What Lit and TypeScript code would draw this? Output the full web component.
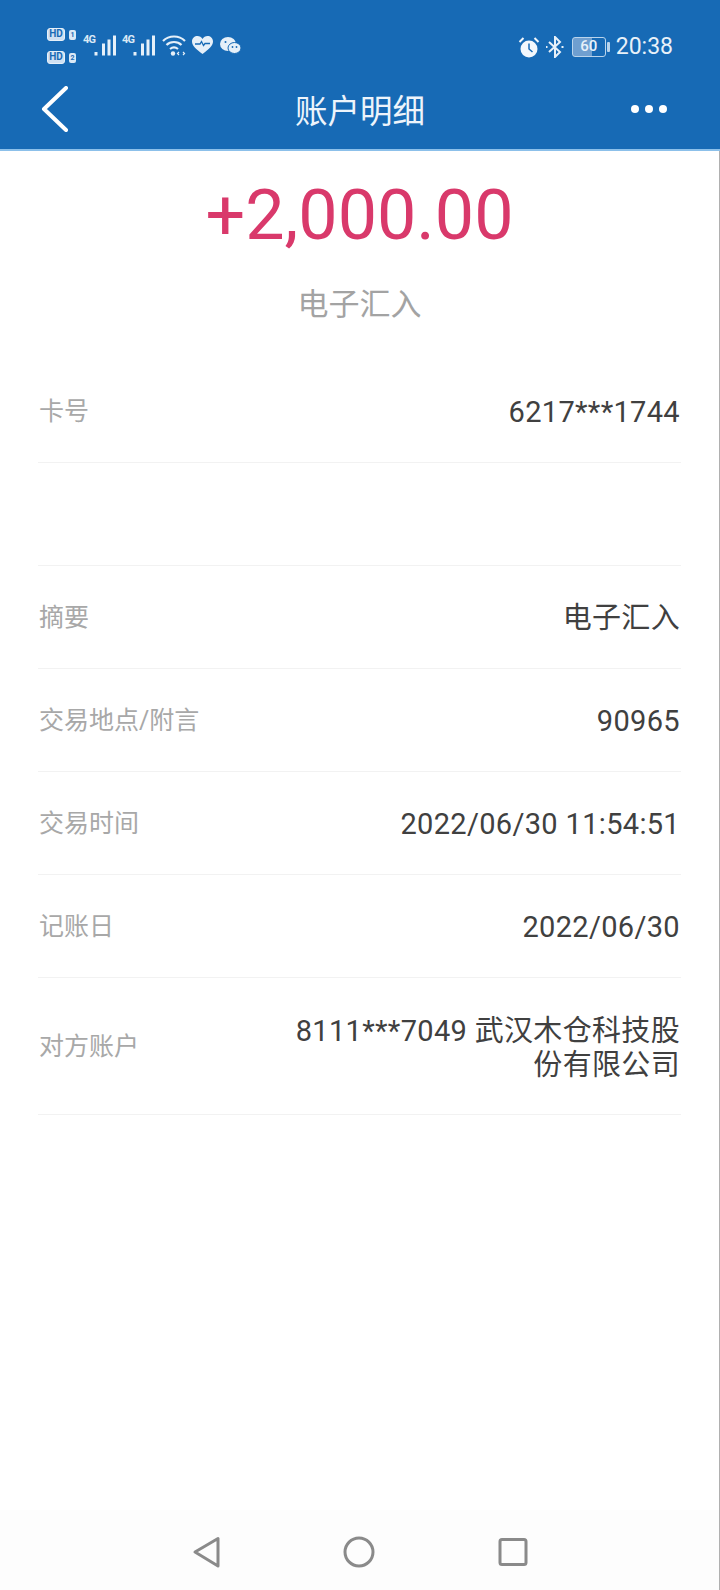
import { LitElement, html, css, svg } from "lit";
import { customElement } from "lit/decorators.js";

const rows: [string, string][] = [
  ["卡号", "6217***1744"],
  ["", ""],
  ["摘要", "电子汇入"],
  ["交易地点/附言", "90965"],
  ["交易时间", "2022/06/30 11:54:51"],
  ["记账日", "2022/06/30"],
];

const bars = svg`<rect x="11.500" y="17" width="3" height="3.500" /><rect x="19" y="8.500" width="3" height="12" /><rect x="24.500" y="4.500" width="3" height="16" /><rect x="30" y=".5" width="3" height="20" />`;

@customElement("app-root")
export class AppRoot extends LitElement {
  static styles = css`
    :host {
      display: block;
      width: 720px;
      height: 1590px;
      background: #fff;
      font-family: Roboto, "Noto Sans CJK SC", sans-serif;
      overflow: hidden;
    }
    .page { display: flex; flex-direction: column; height: 1590px; }
    header {
      height: 151px;
      flex: none;
      background: #176ab5;
      border-bottom: 2px solid #8cc0ea;
      box-sizing: border-box;
      color: #fff;
      display: flex;
      flex-direction: column;
    }
    .status {
      height: 81px;
      padding: 28px 47px 0 47px;
      box-sizing: border-box;
      display: flex;
      justify-content: space-between;
      align-items: flex-start;
    }
    .left, .right { display: flex; }
    .left { gap: 6px; align-items: flex-start; }
    .right { margin-top: 7px; gap: 6px; align-items: center; }
    .hd { display: flex; flex-direction: column; gap: 10px; width: 30px; }
    .hdrow { display: flex; align-items: center; gap: 4px; }
    .hdbox {
      box-sizing: border-box;
      border: 1.5px solid #e6f0f9;
      background: #cfe0f2;
      color: #176ab5;
      font: 700 10px/10px Roboto, sans-serif;
      width: 18px;
      height: 13px;
      border-radius: 3px;
      text-align: center;
    }
    .sim {
      background: #dbe9f6;
      color: #176ab5;
      font: 700 7px/10px Roboto, sans-serif;
      width: 7px;
      height: 10px;
      border-radius: 2px;
      text-align: center;
    }
    .net { position: relative; width: 33px; height: 21px; margin-top: 7px; }
    .net span {
      position: absolute;
      left: 0;
      top: 0;
      font: 700 11px/10px Roboto, sans-serif;
      letter-spacing: -0.8px;
      color: #dbe9f6;
    }
    .net svg { position: absolute; left: 0; top: 0; fill: #e6f0f9; }
    .wifi { margin: 7px 0 0 1px; }
    .heart { margin-top: 8px; }
    .chat { margin: 9px 0 0 1px; }
    .clock {
      font: 400 23px/24px Roboto, sans-serif;
      color: #e8f1f9;
    }
    .battery {
      width: 34px;
      height: 20px;
      border: 1.5px solid #b9d4ec;
      border-radius: 3px;
      box-sizing: border-box;
      font: 500 15px/17px Roboto, sans-serif;
      text-align: center;
      color: #e8f1f9;
      background: linear-gradient(90deg, #6f9fd0 60%, transparent 60%);
    }
    .batwrap { display: flex; align-items: center; gap: 1px; margin: 0 0 0 2px; }
    .cap { width: 3px; height: 10px; background: #b9d4ec; border-radius: 1px; }
    .nav {
      flex: 1;
      display: flex;
      align-items: center;
      justify-content: space-between;
      padding: 0 53px 0 41px;
      position: relative;
      margin-top: -13px;
    }
    .title {
      position: absolute;
      left: 0;
      right: 0;
      padding-top: 6px;
      text-align: center;
      font-size: 32.500px;
      line-height: 40px;
      color: #edf4fb;
    }
    .dots { display: flex; gap: 6px; }
    .dots i { width: 8px; height: 8px; border-radius: 50%; background: #fff; }
    .body {
      flex: 1;
      display: flex;
      flex-direction: column;
      border-right: 1px solid #b0b0b0;
    }
    .amount {
      margin-top: 29px;
      text-align: center;
      font-size: 70px;
      line-height: 70px;
      color: #d9396b;
    }
    .sub {
      margin-top: 35px;
      text-align: center;
      font-size: 31px;
      line-height: 40px;
      color: #a3a3a3;
    }
    .list { margin: 35px 38px 0 38px; }
    .row {
      height: 103px;
      box-sizing: border-box;
      border-bottom: 1px solid #f2f2f2;
      padding: 2px 1px 0;
      display: flex;
      align-items: center;
      justify-content: space-between;
    }
    .row.tall { height: 137px; }
    .label { font-size: 25px; line-height: 34px; color: #a8a8a8; flex: none; }
    .value {
      font-size: 29px;
      line-height: 34px;
      letter-spacing: 0.33px;
      color: #404040;
      text-align: right;
    }
    .tall .value { width: 395px; padding-top: 2px; }
    .spacer { flex: 1; }
    .sysnav {
      height: 80px;
      flex: none;
      position: relative;
      background: #fdfdfd;
    }
    .sysnav svg { position: absolute; left: 160px; top: 0; fill: none; stroke: #8a8a8a; stroke-width: 3; stroke-linejoin: round; }
  `;

  render() {
    return html`<div class="page">
      <header>
        <div class="status">
          <div class="left">
            <div class="hd">
              <div class="hdrow"><span class="hdbox">HD</span><span class="sim">1</span></div>
              <div class="hdrow"><span class="hdbox">HD</span><span class="sim">2</span></div>
            </div>
            <div class="net"><span>4G</span><svg width="34" height="21">${bars}</svg></div>
            <div class="net"><span>4G</span><svg width="34" height="21">${bars}</svg></div>
            <svg class="wifi" width="24" height="21" viewBox="0 0 24 21" fill="none" stroke="#e6f0f9" stroke-width="2.200">
              <path d="M1 6c6-6 16-6 22 0M4.500 10c4-4 11-4 15 0M8 14c2.500-2 5.500-2 8 0" />
              <circle cx="11" cy="18.500" r="2.200" fill="#e6f0f9" stroke="none" />
              <path d="M17 17l-1.500 1.500L17 20M21 17l1.500 1.500L21 20" stroke-width="1.200" />
            </svg>
            <svg class="heart" width="21" height="18" viewBox="0 0 21 18">
              <path d="M10.500 18C4 13 0 9.500 0 5.500 0 2 2.700 0 5.500 0c2 0 4 1 5 3 1-2 3-3 5-3C18.300 0 21 2 21 5.500c0 4-4 7.500-10.500 12.500z" fill="#e6f0f9" />
              <path d="M3 8h5l1.500-2.500 2 4 1.500-2h5" fill="none" stroke="#176ab5" stroke-width="1.300" />
            </svg>
            <svg class="chat" width="21" height="17" viewBox="0 0 21 17">
              <ellipse cx="8" cy="7" rx="8" ry="7" fill="#e6f0f9" />
              <ellipse cx="14.500" cy="11" rx="6.500" ry="5.500" fill="#e6f0f9" stroke="#176ab5" stroke-width="1" />
              <circle cx="12.500" cy="10" r=".9" fill="#176ab5" /><circle cx="16.500" cy="10" r=".9" fill="#176ab5" />
              <circle cx="5.500" cy="5" r="1" fill="#176ab5" />
            </svg>
          </div>
          <div class="right">
            <svg width="22" height="21" viewBox="0 0 22 21">
              <circle cx="11" cy="12" r="8.500" fill="#f2f7fc" />
              <path d="M11 6.500V12l3.500 3" fill="none" stroke="#176ab5" stroke-width="1.500" />
              <path d="M1.500 5l4-4M20.500 5l-4-4" stroke="#f2f7fc" stroke-width="2" />
            </svg>
            <svg width="18" height="22" viewBox="0 0 18 22" fill="none" stroke="#e8f1f9" stroke-width="2">
              <path d="M3 6l11 10-5 5V1l5 5L3 16" />
              <path d="M0 11h1.500M15.500 11h2" stroke-width="2" />
            </svg>
            <div class="batwrap"><div class="battery">60</div><div class="cap"></div></div>
            <span class="clock">20:38</span>
          </div>
        </div>
        <div class="nav">
          <svg width="28" height="46" viewBox="0 0 28 46" fill="none" stroke="#fff" stroke-width="4" stroke-linecap="round" stroke-linejoin="round"><path d="M25 2L3 23l22 21" /></svg>
          <div class="title">账户明细</div>
          <div class="dots"><i></i><i></i><i></i></div>
        </div>
      </header>
      <div class="body">
        <div class="amount">+2,000.00</div>
        <div class="sub">电子汇入</div>
        <div class="list">
          ${rows.map(([l, v]) => html`<div class="row"><span class="label">${l}</span><span class="value">${v}</span></div>`)}
          <div class="row tall"><span class="label">对方账户</span><span class="value">8111***7049 武汉木仓科技股份有限公司</span></div>
        </div>
        <div class="spacer"></div>
        <div class="sysnav">
          <svg width="400" height="80" viewBox="0 0 400 80">
            <path d="M35 42 L58 28.500 V56 Z" />
            <circle cx="199" cy="42" r="14" />
            <rect x="340" y="29.500" width="26" height="25" rx="2" />
          </svg>
        </div>
      </div>
    </div>`;
  }
}
